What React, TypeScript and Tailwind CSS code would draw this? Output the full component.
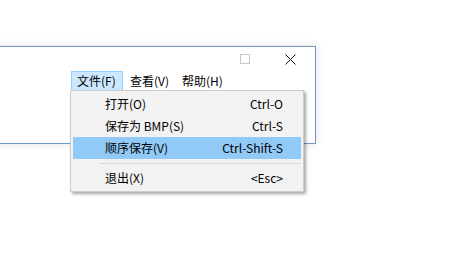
import React from 'react'

const items = [
	{ label: '打开(O)', key: 'Ctrl-O' },
	{ label: '保存为 BMP(S)', key: 'Ctrl-S' },
	{ label: '顺序保存(V)', key: 'Ctrl-Shift-S', active: true },
]

const App: React.FC = () => {
	return (
		<div
			className="relative w-[465px] h-[269px] bg-white overflow-hidden text-[12px] text-black"
			style={{ fontFamily: '"Noto Sans CJK SC", "Noto Sans", sans-serif' }}
		>
			{/* window */}
			<div className="absolute left-[-10px] top-[46px] w-[326px] h-[98px] bg-white border border-[#6d98c6] shadow-[0_0_8px_rgba(0,0,0,0.12)] flex flex-col">
				<div className="h-[24px] flex items-center justify-end pr-[18px] gap-[35px]">
					<div className="w-[10px] h-[10px] border border-[#c8c8c8]" />
					<svg width="11" height="11" viewBox="0 0 11 11" className="mr-[1px]">
						<path d="M0.5 0.5 L10.5 10.5 M10.5 0.5 L0.5 10.5" stroke="#111" strokeWidth="1" />
					</svg>
				</div>
				<div className="h-[20px] flex items-stretch pl-[80px]">
					<div className="px-[5px] flex items-center bg-[#cce8ff] border border-[#99d1ff] w-[52px]">文件(F)</div>
					<div className="pl-[7px] pr-[6px] flex items-center">查看(V)</div>
					<div className="px-[7px] flex items-center">帮助(H)</div>
				</div>
			</div>

			{/* dropdown */}
			<div className="absolute left-[70px] top-[90px] w-[234px] bg-[#f2f2f2] border border-[#cccccc] shadow-[2px_2px_3px_rgba(0,0,0,0.35)] py-[2px] px-[2px]">
				{items.map((it, idx) => (
					<div
						key={idx}
						className={`h-[22px] flex items-center justify-between pl-[32px] pr-[18px] ${
							it.active ? 'bg-[#91c9f7]' : ''
						}`}
					>
						<span>{it.label}</span>
						<span>{it.key}</span>
					</div>
				))}
				<div className="h-[8px] flex items-center pl-[27px]">
					<div className="h-px w-full bg-[#d7d7d7]" />
				</div>
				<div className="h-[22px] flex items-center justify-between pl-[32px] pr-[18px]">
					<span>退出(X)</span>
					<span>&lt;Esc&gt;</span>
				</div>
			</div>
		</div>
	)
}

export default App
